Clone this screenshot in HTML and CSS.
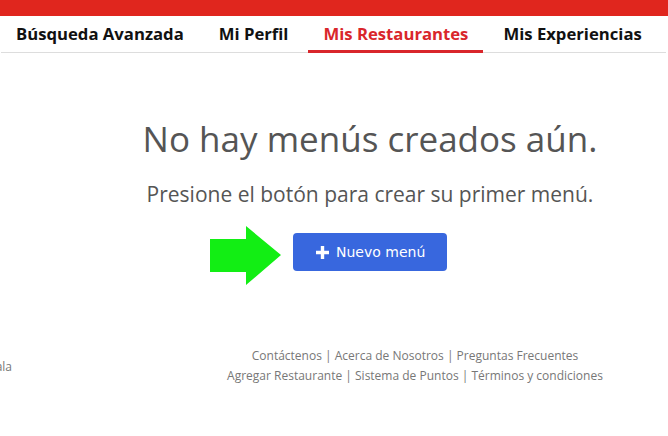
FILE: index.html
```html
<!DOCTYPE html>
<html lang="es">
<head>
  <meta charset="UTF-8" />
  <meta name="viewport" content="width=device-width, initial-scale=1" />
  <title>Mis Restaurantes</title>
  <link rel="stylesheet" href="styles.css">
</head>
<body>

  <div class="top-bar"></div>

  <!-- Main navigation -->
  <nav class="main-nav">
    <a href="#" class="nav-link">Búsqueda Avanzada</a>
    <a href="#" class="nav-link">Mi Perfil</a>
    <a href="#" class="nav-link active">Mis Restaurantes</a>
    <a href="#" class="nav-link">Mis Experiencias</a>
  </nav>

  <!-- Empty state -->
  <main class="content">
    <h1 class="empty-title">No hay menús creados aún.</h1>
    <p class="empty-text">Presione el botón para crear su primer menú.</p>
    <div class="action-row">
      <svg class="hint-arrow" width="72" height="60" viewBox="0 0 72 60">
        <polygon points="0,13 36,13 36,0 71,29 36,59 36,46 0,46" fill="#12ee14" />
      </svg>
      <button class="btn-new">
        <svg class="btn-icon" width="13" height="13" viewBox="0 0 13 13">
          <path d="M4.8 0h3.4v4.8h4.8v3.4h-4.8v4.8h-3.4v-4.8h-4.8v-3.4h4.8z" fill="#fff" />
        </svg>
        Nuevo menú
      </button>
    </div>
  </main>

  <!-- Footer -->
  <footer class="site-footer">
    <div class="footer-left"><span>Guatemala</span></div>
    <div class="footer-links">
      <p><a href="#">Contáctenos</a> | <a href="#">Acerca de Nosotros</a> | <a href="#">Preguntas Frecuentes</a></p>
      <p><a href="#">Agregar Restaurante</a> | <a href="#">Sistema de Puntos</a> | <a href="#">Términos y condiciones</a></p>
    </div>
  </footer>

</body>
</html>
```

FILE: styles.css
```css
body {
  margin: 0;
  font-family: "Open Sans", Arial, sans-serif;
  background: #fff;
  color: #555;
  overflow: hidden;
}
.top-bar {
  height: 16px;
  background: #e0261e;
}
.main-nav {
  display: flex;
  gap: 5px;
  margin: 0 2px 0 1px;
  border-bottom: 1px solid #ddd;
}
.nav-link {
  flex-shrink: 0;
  white-space: nowrap;
  padding: 6px 15px 4px;
  font-size: 16.7px;
  font-weight: bold;
  line-height: 24px;
  color: #111;
  text-decoration: none;
  border-bottom: 3px solid transparent;
  margin-bottom: -1px;
}
.nav-link.active {
  color: #d9262b;
  border-bottom-color: #d9262b;
}
.content {
  padding-left: 72px;
  text-align: center;
}
.empty-title {
  margin: 62px 0 0;
  font-size: 35px;
  font-weight: normal;
  line-height: 48px;
  color: #555;
}
.empty-text {
  margin: 17px 0 0;
  font-size: 21px;
  line-height: 28px;
  color: #555;
}
.action-row {
  display: flex;
  justify-content: center;
  align-items: flex-start;
  margin-top: 25px;
}
.hint-arrow {
  flex-shrink: 0;
  margin: -7px 11px 0 -83px;
}
.btn-new {
  display: flex;
  align-items: center;
  gap: 7px;
  flex-shrink: 0;
  width: 154px;
  height: 38px;
  padding: 0 0 0 23px;
  background: #3867de;
  color: #fff;
  border: none;
  border-radius: 4px;
  font-family: "DejaVu Sans", Verdana, sans-serif;
  font-size: 14px;
  cursor: pointer;
}
.site-footer {
  display: flex;
  align-items: center;
  margin-top: 60px;
}
.footer-left {
  display: flex;
  justify-content: flex-end;
  width: 12px;
  flex-shrink: 0;
  font-size: 12px;
  color: #777;
  white-space: nowrap;
}
.footer-links {
  margin-left: 150px;
  flex: 1;
  text-align: center;
  font-size: 12px;
  line-height: 20px;
  color: #777;
}
.footer-links p {
  margin: 0;
}
.footer-links a {
  color: #777;
  text-decoration: none;
}
```
